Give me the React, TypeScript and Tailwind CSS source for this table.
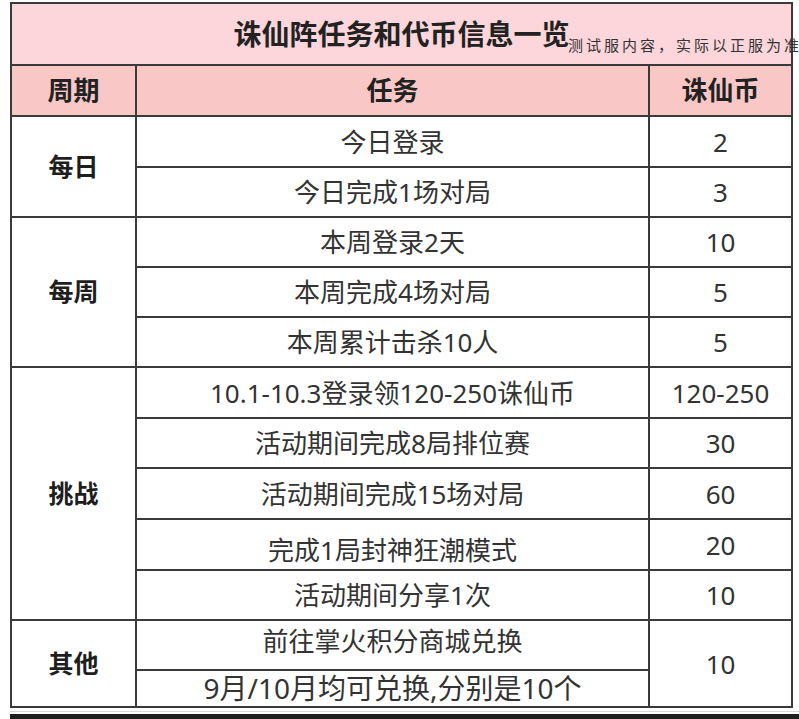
type Task = {
  task: string;
  coin?: string;
  coinSpan?: number;
  h: string;
  textCls?: string;
};

type Group = { period: string; tasks: Task[] };

const groups: Group[] = [
  {
    period: '每日',
    tasks: [
      { task: '今日登录', coin: '2', h: 'h-[51px]' },
      { task: '今日完成1场对局', coin: '3', h: 'h-[50px]' },
    ],
  },
  {
    period: '每周',
    tasks: [
      { task: '本周登录2天', coin: '10', h: 'h-[50px]' },
      { task: '本周完成4场对局', coin: '5', h: 'h-[50px]' },
      { task: '本周累计击杀10人', coin: '5', h: 'h-[50px]' },
    ],
  },
  {
    period: '挑战',
    tasks: [
      { task: '10.1-10.3登录领120-250诛仙币', coin: '120-250', h: 'h-[51px]' },
      { task: '活动期间完成8局排位赛', coin: '30', h: 'h-[50px]' },
      { task: '活动期间完成15场对局', coin: '60', h: 'h-[51px]' },
      { task: '完成1局封神狂潮模式', coin: '20', h: 'h-[51px]', textCls: 'pt-[11px]' },
      { task: '活动期间分享1次', coin: '10', h: 'h-[50px]' },
    ],
  },
  {
    period: '其他',
    tasks: [
      { task: '前往掌火积分商城兑换', coin: '10', coinSpan: 2, h: 'h-[50px]', textCls: 'pb-[9px]' },
      { task: '9月/10月均可兑换,分别是10个', h: 'h-[37px]', textCls: 'text-[28px] pb-[2px]' },
    ],
  },
];

const cell = 'border-2 border-[#3a3a3a] p-0 text-center align-middle';

export default function App() {
  return (
    <div className="relative h-[719px] w-full overflow-hidden bg-white font-['Noto_Sans','Noto_Sans_CJK_SC',sans-serif] text-[#333]">
      <div className="pl-[10px] pt-[2px]">
        <table className="w-[781px] table-fixed border-collapse">
          <colgroup>
            <col className="w-[125px]" />
            <col className="w-[513px]" />
            <col className="w-[143px]" />
          </colgroup>
          <tbody>
            <tr className="h-[62px] bg-[#fcd6db]">
              <td colSpan={3} className={cell}>
                <span className="text-[28px] font-bold text-[#222]">诛仙阵任务和代币信息一览</span>
              </td>
            </tr>
            <tr className="h-[51px] bg-[#fac7c7] text-[26px] font-bold text-[#222]">
              <td className={cell}>周期</td>
              <td className={cell}>任务</td>
              <td className={cell}>诛仙币</td>
            </tr>
            {groups.map((g) =>
              g.tasks.map((t, i) => (
                <tr key={g.period + i} className={t.h}>
                  {i === 0 && (
                    <td rowSpan={g.tasks.length} className={`${cell} text-[25px] font-bold text-[#1e1e1e]`}>
                      {g.period}
                    </td>
                  )}
                  <td className={cell}>
                    <div className={`text-[26px] leading-none ${t.textCls ?? ''}`}>{t.task}</div>
                  </td>
                  {t.coin && (
                    <td rowSpan={t.coinSpan ?? 1} className={`${cell} text-[26px] leading-none`}>
                      {t.coin}
                    </td>
                  )}
                </tr>
              ))
            )}
          </tbody>
        </table>
      </div>
      <div className="ml-[10px] mt-[3px] border-t border-[#d8d8d8]" />
      <div className="ml-[10px] mt-[2px] h-[6px] bg-[#1f1f1f]" />

      <div className="absolute left-[568px] top-[37px] z-10 whitespace-nowrap font-['Noto_Sans_CJK_SC',sans-serif] text-[15px] leading-none tracking-[3px] text-[#333]">
        测试服内容，实际以正服为准
      </div>
    </div>
  );
}
